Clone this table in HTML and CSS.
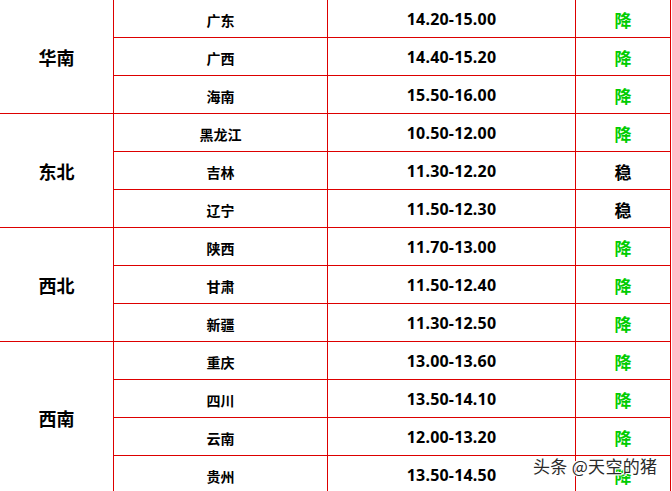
FILE: index.html
```html
<!DOCTYPE html>
<html lang="zh-CN">
<head>
<meta charset="utf-8">
<title>生猪价格</title>
<link rel="stylesheet" href="styles.css">
</head>
<body>
<div class="page">
<table class="price">
  <colgroup>
    <col class="c-region"><col class="c-prov"><col class="c-price"><col class="c-trend">
  </colgroup>
  <tbody>
    <tr><td class="region" rowspan="3">华南</td><td class="prov">广东</td><td class="num">14.20-15.00</td><td class="trend down">降</td></tr>
    <tr><td class="prov">广西</td><td class="num">14.40-15.20</td><td class="trend down">降</td></tr>
    <tr><td class="prov">海南</td><td class="num">15.50-16.00</td><td class="trend down">降</td></tr>
    <tr><td class="region" rowspan="3">东北</td><td class="prov">黑龙江</td><td class="num">10.50-12.00</td><td class="trend down">降</td></tr>
    <tr><td class="prov">吉林</td><td class="num">11.30-12.20</td><td class="trend flat">稳</td></tr>
    <tr><td class="prov">辽宁</td><td class="num">11.50-12.30</td><td class="trend flat">稳</td></tr>
    <tr><td class="region" rowspan="3">西北</td><td class="prov">陕西</td><td class="num">11.70-13.00</td><td class="trend down">降</td></tr>
    <tr><td class="prov">甘肃</td><td class="num">11.50-12.40</td><td class="trend down">降</td></tr>
    <tr><td class="prov">新疆</td><td class="num">11.30-12.50</td><td class="trend down">降</td></tr>
    <tr><td class="region" rowspan="4">西南</td><td class="prov">重庆</td><td class="num">13.00-13.60</td><td class="trend down">降</td></tr>
    <tr><td class="prov">四川</td><td class="num">13.50-14.10</td><td class="trend down">降</td></tr>
    <tr><td class="prov">云南</td><td class="num">12.00-13.20</td><td class="trend down">降</td></tr>
    <tr><td class="prov">贵州</td><td class="num">13.50-14.50</td><td class="trend down">降</td></tr>
  </tbody>
</table>
<div class="watermark">头条 @天空的猪</div>
</div>
</body>
</html>
```

FILE: styles.css
```css
html, body {
  margin: 0;
  padding: 0;
  background: #ffffff;
  overflow: hidden;
}
body {
  width: 672px;
  height: 491px;
  font-family: "Noto Sans", "Noto Sans CJK SC", sans-serif;
  color: #000;
}
.page {
  position: relative;
  width: 672px;
  height: 491px;
  overflow: hidden;
}
.price {
  border-collapse: collapse;
  table-layout: fixed;
  width: 672px;
  margin: -1px 0 0 -1px;
}
.c-region { width: 114px; }
.c-prov { width: 214px; }
.c-price { width: 248px; }
.c-trend { width: 95px; }
.price td {
  border: 1px solid #dd0000;
  height: 37px;
  padding: 0;
  text-align: center;
  vertical-align: middle;
  font-weight: 700;
  box-sizing: border-box;
}
.price tr { height: 38px; }
.region {
  font-size: 18px;
  font-family: "Noto Sans CJK SC", sans-serif;
}
.prov {
  font-size: 14px;
  font-family: "Noto Sans CJK SC", sans-serif;
  padding-top: 2px !important;
}
.num {
  font-size: 16px;
  letter-spacing: 0.2px;
  padding-top: 1px !important;
}
.trend {
  font-size: 17px;
  font-family: "Noto Sans CJK SC", sans-serif;
  padding-top: 1px !important;
}
.trend.down { color: #00cc00; }
.trend.flat { color: #000; }
.watermark {
  position: absolute;
  left: 533px;
  top: 453px;
  font-family: "Noto Sans CJK SC", sans-serif;
  font-size: 17px;
  font-weight: 400;
  color: #2a2a2a;
  letter-spacing: 0.3px;
  text-shadow: 1px 0 0 #fff, -1px 0 0 #fff, 0 1px 0 #fff, 0 -1px 0 #fff, 1px 1px 0 #fff, -1px -1px 0 #fff;
  white-space: nowrap;
}
```
